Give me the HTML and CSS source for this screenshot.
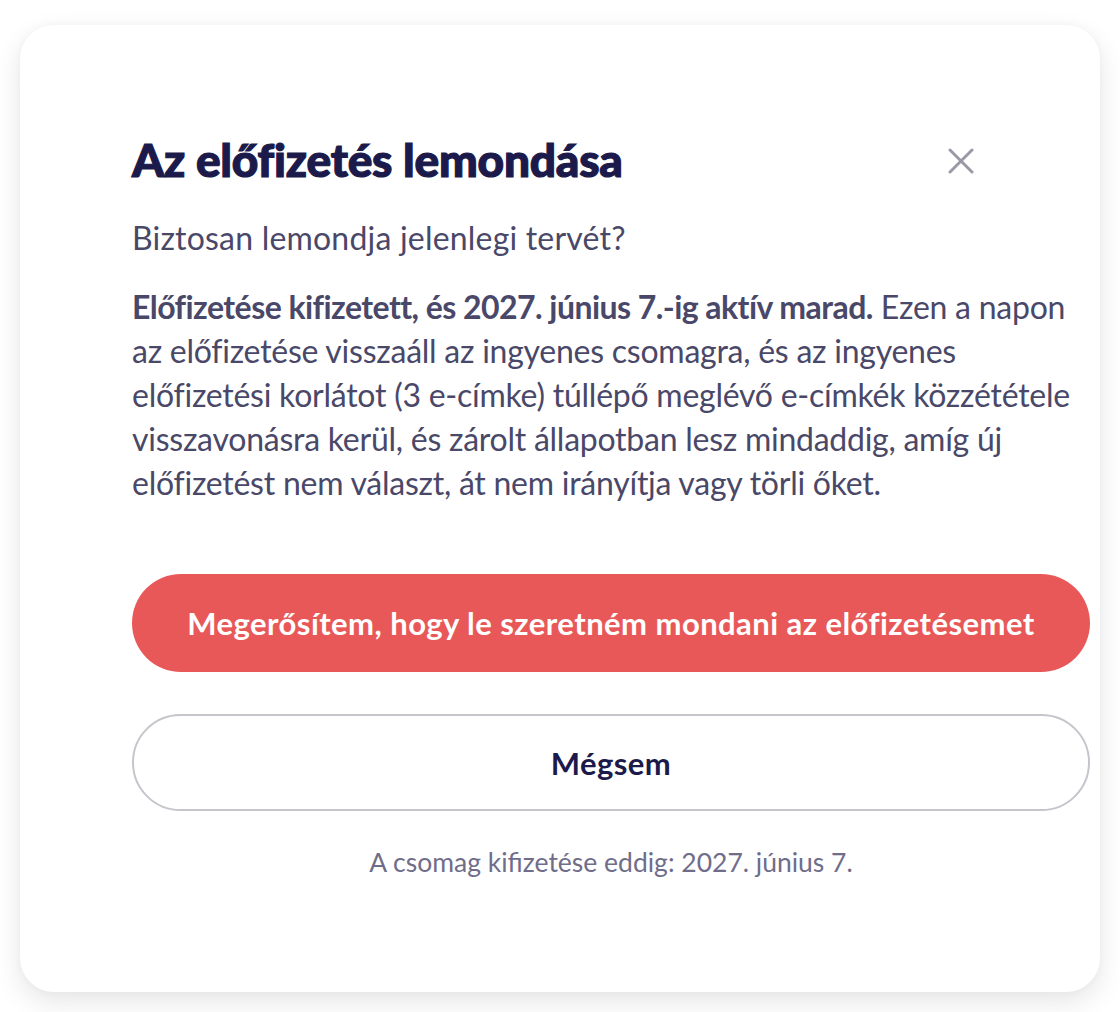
FILE: index.html
```html
<!DOCTYPE html>
<html lang="hu">
<head>
<meta charset="utf-8">
<title>Az előfizetés lemondása</title>
<link rel="stylesheet" href="styles.css">
</head>
<body>
<div class="card">
  <button class="close" aria-label="Bezárás">
    <svg width="26" height="26" viewBox="0 0 26 26"><path d="M2 2 L24 24 M24 2 L2 24" stroke="#9a99a6" stroke-width="3" stroke-linecap="round" fill="none"/></svg>
  </button>
  <h1 class="title">Az előfizetés lemondása</h1>
  <p class="subtitle">Biztosan lemondja jelenlegi tervét?</p>
  <p class="body"><strong>Előfizetése kifizetett, és 2027. június 7.-ig aktív marad.</strong> Ezen a napon<br>az előfizetése visszaáll az ingyenes csomagra, és az ingyenes<br>előfizetési korlátot (3 e-címke) túllépő meglévő e-címkék közzététele<br>visszavonásra kerül, és zárolt állapotban lesz mindaddig, amíg új<br>előfizetést nem választ, át nem irányítja vagy törli őket.</p>
  <button class="btn btn-danger">Megerősítem, hogy le szeretném mondani az előfizetésemet</button>
  <button class="btn btn-outline">Mégsem</button>
  <p class="footnote">A csomag kifizetése eddig: 2027. június 7.</p>
</div>
</body>
</html>
```
FILE: styles.css
```css
* { box-sizing: border-box; }
html, body { margin: 0; background: #ffffff; }
body {
  padding: 25px 20px 20px 20px;
  font-family: Lato, "Noto Sans", sans-serif;
  color: #4a4868;
}
.card {
  position: relative;
  width: 1080px;
  height: 967px;
  background: #fff;
  border-radius: 34px;
  box-shadow: 0 10px 28px rgba(0, 0, 0, 0.10), 0 0 10px rgba(0,0,0,0.03);
  padding: 111px 10px 0 112px;
  display: flex;
  flex-direction: column;
}
.close {
  position: absolute;
  left: 928px;
  top: 123px;
  width: 26px;
  height: 26px;
  padding: 0;
  border: 0;
  background: none;
  display: flex;
}
.title {
  margin: 0;
  font-size: 46px;
  line-height: 48px;
  font-weight: 900;
  color: #1b1a4b;
  letter-spacing: -0.2px;
  -webkit-text-stroke: 1.2px #1b1a4b;
}
.subtitle {
  margin: 36px 0 0 0;
  font-size: 32px;
  line-height: 36px;
  letter-spacing: 0.2px;
  color: #4a4868;
}
.body {
  margin: 29px 0 0 0;
  font-size: 32px;
  line-height: 44px;
  letter-spacing: -0.25px;
  color: #4a4868;
  white-space: nowrap;
}
.body strong { font-weight: 700; letter-spacing: -0.55px; color: #4a4868; }
.btn {
  display: flex;
  align-items: center;
  justify-content: center;
  width: 958px;
  height: 98px;
  border-radius: 49px;
  font-family: Lato, "Noto Sans", sans-serif;
  font-size: 31px;
  font-weight: 700;
  letter-spacing: 0.45px;
  padding: 0;
  cursor: pointer;
}
.btn-danger {
  margin-top: 69px;
  background: #e95858;
  color: #fff;
  border: 0;
}
.btn-outline {
  margin-top: 42px;
  height: 97px;
  background: #fff;
  color: #1b1a4b;
  border: 2px solid #c6c5cc;
}
.footnote {
  margin: 36px 0 0 0;
  width: 958px;
  text-align: center;
  font-size: 26.5px;
  line-height: 30px;
  color: #6f6d8a;
}
```
